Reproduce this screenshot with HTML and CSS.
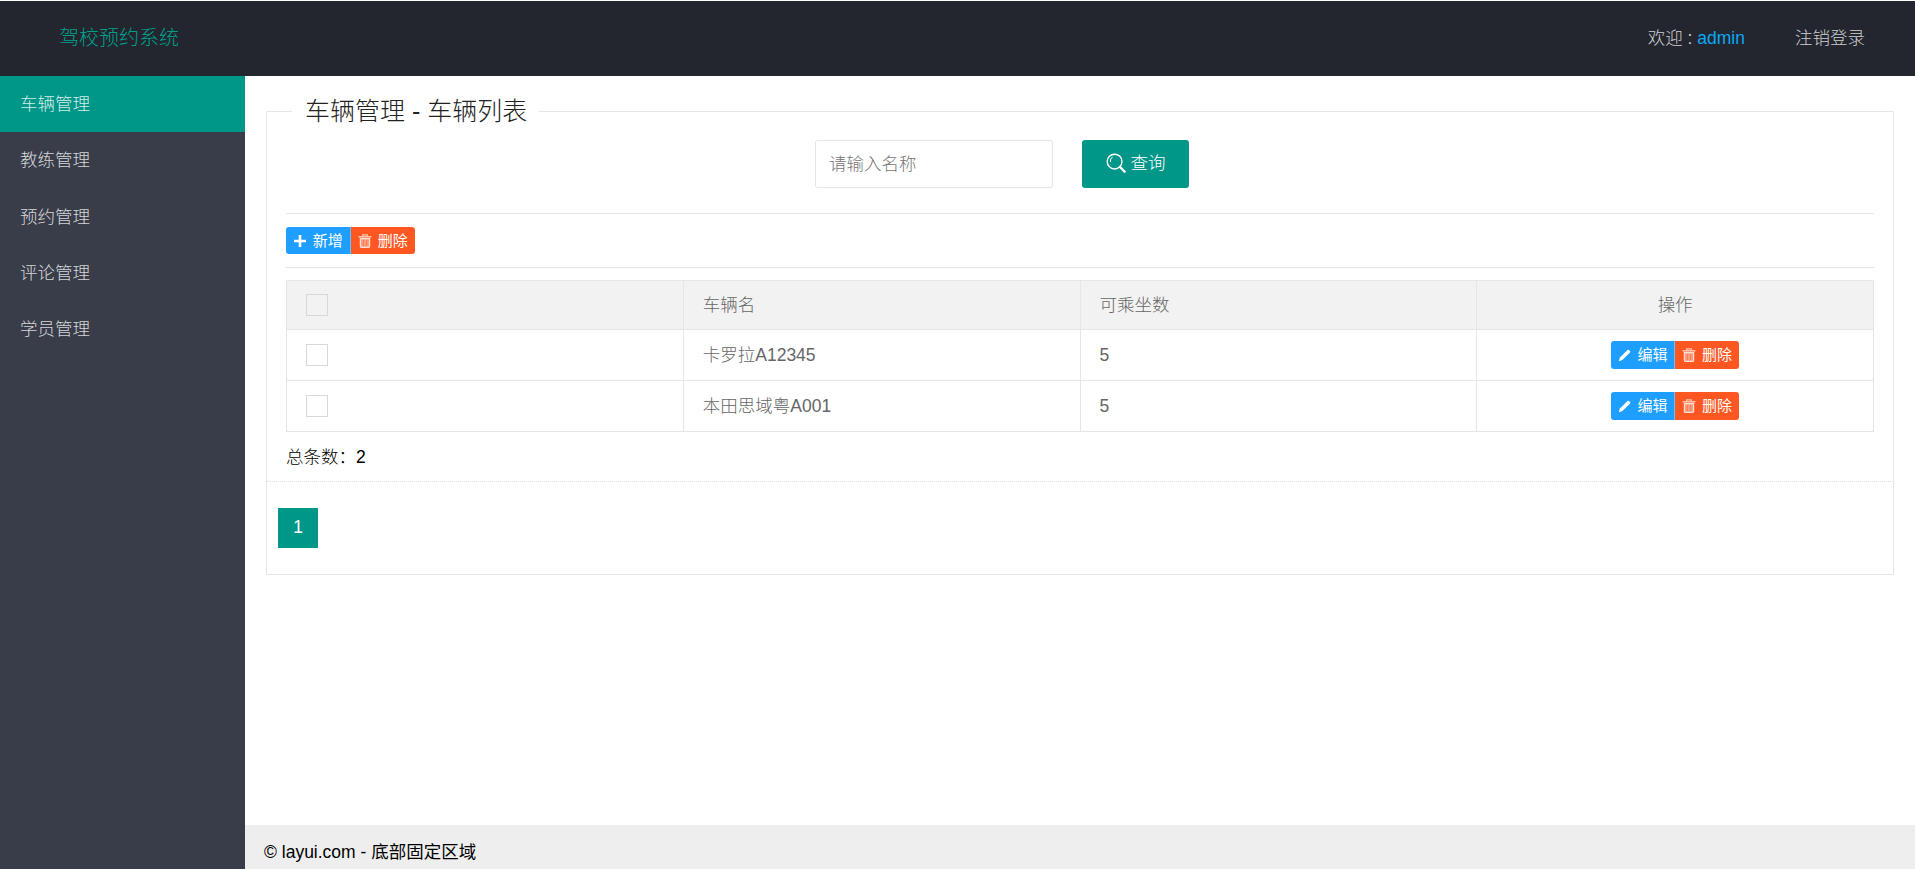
FILE: index.html
```html
<!DOCTYPE html>
<html lang="zh-CN">
<head>
<meta charset="utf-8">
<title>驾校预约系统</title>
<link rel="stylesheet" href="styles.css">
</head>
<body>
<div class="app">
  <header class="topbar">
    <div class="brand">驾校预约系统</div>
    <div class="topnav">
      <span class="welcome">欢迎 : <a class="user">admin</a></span>
      <a class="logout">注销登录</a>
    </div>
  </header>
  <aside class="side">
    <a class="side-item active">车辆管理</a>
    <a class="side-item">教练管理</a>
    <a class="side-item">预约管理</a>
    <a class="side-item">评论管理</a>
    <a class="side-item">学员管理</a>
  </aside>
  <main class="main">
    <div class="content">
      <fieldset class="panel">
        <legend class="panel-title">车辆管理 - 车辆列表</legend>
        <div class="panel-body">
          <form class="search">
            <input class="search-input" type="text" placeholder="请输入名称">
            <button class="search-btn" type="button">
              <svg class="ico-search" viewBox="0 0 20 20"><circle cx="8.6" cy="8.6" r="7.4" fill="none" stroke="#fff" stroke-width="1.4"/><path d="M6.6 3.8A5.4 5.4 0 0 0 4.4 9" fill="none" stroke="#fff" stroke-width="1"/><path d="M14 14l4.6 4.6" stroke="#fff" stroke-width="2.4" stroke-linecap="round"/></svg>
              查询
            </button>
          </form>
          <hr class="rule">
          <div class="toolbar">
            <a class="btn blue"><svg class="ico" viewBox="0 0 14 14"><path d="M7 1v12M1 7h12" stroke="#fff" stroke-width="2.6"/></svg>新增</a><a class="btn orange"><svg class="ico" viewBox="0 0 14 14"><path d="M.6 2.8h12.8" fill="none" stroke="#ffc4b0" stroke-width="1.6"/><path d="M4.6 2.2V.9h4.8v1.3" fill="none" stroke="#ffc4b0" stroke-width="1.2"/><path d="M2.4 4.6h9.2v8a.8.8 0 0 1-.8.8H3.2a.8.8 0 0 1-.8-.8z" fill="#ff9d80" stroke="#ffe0d6" stroke-width="1.2"/><path d="M5.4 6v6M8.6 6v6" stroke="#ff7a50" stroke-width="1"/></svg>删除</a>
          </div>
          <hr class="rule">
          <table class="grid">
            <thead>
              <tr>
                <th><input class="check" type="checkbox"></th>
                <th>车辆名</th>
                <th>可乘坐数</th>
                <th class="center">操作</th>
              </tr>
            </thead>
            <tbody>
              <tr>
                <td><input class="check" type="checkbox"></td>
                <td>卡罗拉A12345</td>
                <td>5</td>
                <td class="center"><div class="ops"><a class="btn blue"><svg class="ico" viewBox="0 0 14 14"><path d="M.8 13.2l1.1-3.6 7.6-7.6a1 1 0 0 1 1.4 0l1.1 1.1a1 1 0 0 1 0 1.4l-7.6 7.6z" fill="#fff"/></svg>编辑</a><a class="btn orange"><svg class="ico" viewBox="0 0 14 14"><path d="M.6 2.8h12.8" fill="none" stroke="#ffc4b0" stroke-width="1.6"/><path d="M4.6 2.2V.9h4.8v1.3" fill="none" stroke="#ffc4b0" stroke-width="1.2"/><path d="M2.4 4.6h9.2v8a.8.8 0 0 1-.8.8H3.2a.8.8 0 0 1-.8-.8z" fill="#ff9d80" stroke="#ffe0d6" stroke-width="1.2"/><path d="M5.4 6v6M8.6 6v6" stroke="#ff7a50" stroke-width="1"/></svg>删除</a></div></td>
              </tr>
              <tr>
                <td><input class="check" type="checkbox"></td>
                <td>本田思域粤A001</td>
                <td>5</td>
                <td class="center"><div class="ops"><a class="btn blue"><svg class="ico" viewBox="0 0 14 14"><path d="M.8 13.2l1.1-3.6 7.6-7.6a1 1 0 0 1 1.4 0l1.1 1.1a1 1 0 0 1 0 1.4l-7.6 7.6z" fill="#fff"/></svg>编辑</a><a class="btn orange"><svg class="ico" viewBox="0 0 14 14"><path d="M.6 2.8h12.8" fill="none" stroke="#ffc4b0" stroke-width="1.6"/><path d="M4.6 2.2V.9h4.8v1.3" fill="none" stroke="#ffc4b0" stroke-width="1.2"/><path d="M2.4 4.6h9.2v8a.8.8 0 0 1-.8.8H3.2a.8.8 0 0 1-.8-.8z" fill="#ff9d80" stroke="#ffe0d6" stroke-width="1.2"/><path d="M5.4 6v6M8.6 6v6" stroke="#ff7a50" stroke-width="1"/></svg>删除</a></div></td>
              </tr>
            </tbody>
          </table>
          <div class="total">总条数：2</div>
        </div>
        <div class="pager-wrap">
          <a class="page current">1</a>
        </div>
      </fieldset>
    </div>
    <footer class="foot">© layui.com - 底部固定区域</footer>
  </main>
</div>
</body>
</html>
```

FILE: styles.css
```css
* { box-sizing: border-box; }
html, body { margin: 0; height: 100%; overflow: hidden; }
body {
  font-family: "Liberation Sans", "Noto Sans CJK SC", sans-serif;
  font-size: 17.5px;
  line-height: 24px;
  font-weight: 300;
  color: #666;
  background: #fff;
}
.app {
  height: 869px;
  display: grid;
  grid-template-columns: 245px 1fr;
  grid-template-rows: 76px 1fr;
}
.topbar {
  grid-column: 1 / 3;
  margin-top: 1px;
  background: #23262e;
  display: flex;
  align-items: center;
  justify-content: space-between;
  padding: 0 49px 0 59px;
}
.brand { color: #00a08f; font-size: 20px; line-height: 24px; margin-top: -2px; }
.topnav { display: flex; gap: 50px; color: rgba(255,255,255,.78); margin-top: -2px; margin-right: 1px; }
.user { color: #0aa8f5; font-weight: 400; }
.side { background: #393d49; display: flex; flex-direction: column; }
.side-item {
  height: 56.25px;
  line-height: 56px;
  padding-left: 20px;
  color: rgba(255,255,255,.8);
}
.side-item.active { background: #009688; color: rgba(255,255,255,.85); }
.main { display: flex; flex-direction: column; min-width: 0; }
.content { flex: 1; padding: 20px 21px 0; }
.foot {
  height: 44px;
  background: #eee;
  color: #000;
  padding: 14px 0 0 19px;
  line-height: 26px;
  font-weight: 400;
}
.panel {
  margin: 0;
  padding: 0;
  min-width: 0;
  border: 1px solid #e6e6e6;
}
.panel-title {
  margin-left: 25px;
  padding: 0 12px 0 13px;
  font-size: 25px;
  line-height: 30px;
  color: #222;
}
.panel-body { padding: 14px 19px 0; }
.search { display: flex; gap: 29px; padding-left: 529px; }
.search-input {
  width: 238px;
  height: 48px;
  border: 1px solid #e6e6e6;
  border-radius: 2px;
  padding: 0 13px;
  font: inherit;
  color: #666;
  outline: none;
}
.search-input::placeholder { color: #757575; }
.search-btn {
  width: 107px;
  height: 48px;
  border: 0;
  border-radius: 3px;
  background: #009688;
  color: #fff;
  font: inherit;
  display: flex;
  align-items: center;
  justify-content: center;
  gap: 5px;
  padding: 0 0 3px;
}
.ico-search { width: 20px; height: 20px; }
.rule { margin: 0; border: 0; border-top: 1px solid #e6e6e6; }
.search + .rule { margin-top: 25px; }
.toolbar { display: flex; margin: 13px 0; }
.btn {
  display: flex;
  align-items: center;
  justify-content: center;
  gap: 6px;
  width: 64.5px;
  height: 27px;
  color: #fff;
  font-size: 15px;
  line-height: 20px;
  font-weight: 400;
}
.btn.blue { background: #1e9fff; border-radius: 3px 0 0 3px; border-right: 1px solid #fff5; }
.btn.orange { background: #ff5722; border-radius: 0 3px 3px 0; }
.ops .btn { width: 64px; height: 28px; }
.ico { width: 14px; height: 14px; flex: none; }
.grid {
  width: 100%;
  margin-top: 12px;
  border-collapse: collapse;
  table-layout: fixed;
}
.grid th, .grid td {
  border: 1px solid #e6e6e6;
  padding: 0 19px;
  font-weight: 300;
  text-align: left;
  height: 51px;
}
.grid th { background: #f2f2f2; height: 49px; }
.grid .center { text-align: center; }
.check {
  appearance: none;
  display: block;
  margin: 0;
  width: 22px;
  height: 22px;
  border: 1px solid #d8d8d8;
  background: transparent;
}
.grid td .check { background: #fff; }
.ops { display: flex; justify-content: center; }
.total { color: #000; line-height: 26px; margin-top: 12px; font-weight: 300; }
.pager-wrap {
  margin-top: 11px;
  border-top: 1px dotted #ddd;
  padding: 26px 0 26px 11px;
}
.page {
  display: block;
  width: 40px;
  height: 40px;
  line-height: 38px;
  text-align: center;
  background: #009688;
  color: #fff;
  font-weight: 400;
}
```
